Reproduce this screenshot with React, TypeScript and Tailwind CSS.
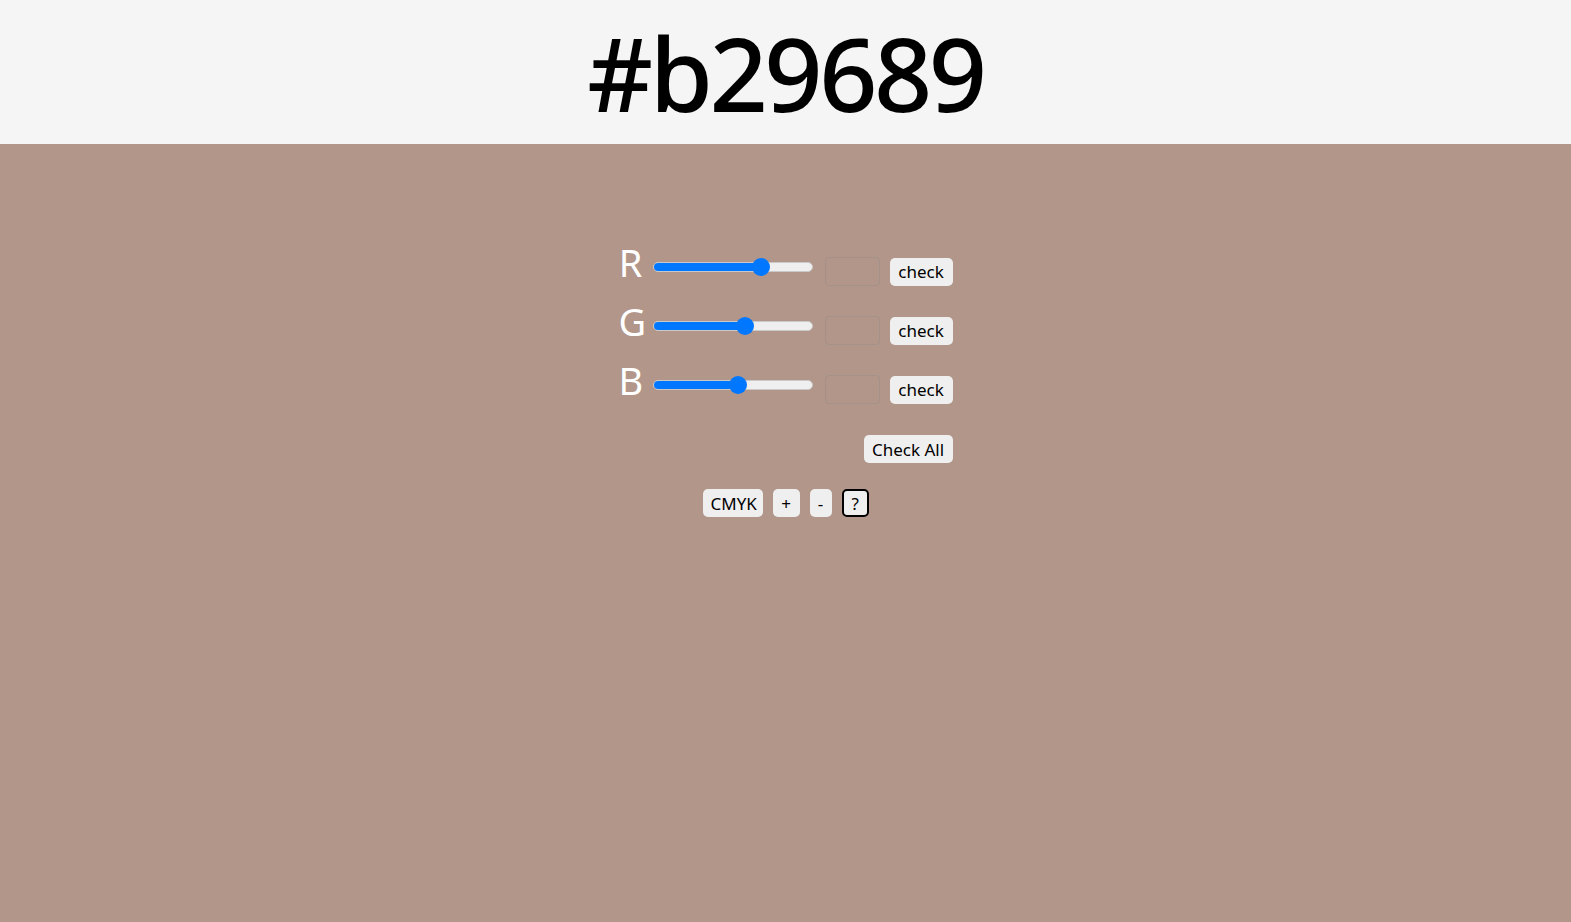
import React, { useState } from 'react';

const font = { fontFamily: '"Noto Sans", "Open Sans", sans-serif' };

type Channel = { label: string; value: number };

const Slider: React.FC<{ value: number }> = ({ value }) => {
  const pct = value / 255;
  return (
    <div className="relative w-[160px] h-[18px] flex items-center">
      <div className="w-full h-[10px] rounded-full bg-[#efefef] border border-[#c9c9c9] overflow-hidden">
        <div className="h-full bg-[#0077ff]" style={{ width: `${9 + pct * 142}px` }} />
      </div>
      <div
        className="absolute top-0 w-[18px] h-[18px] rounded-full bg-[#0077ff]"
        style={{ left: `${pct * 142}px` }}
      />
    </div>
  );
};

const Btn: React.FC<{ children: React.ReactNode; className?: string }> = ({ children, className = '' }) => (
  <button className={`h-[28px] px-[8px] rounded-[5px] bg-[#efefef] text-black text-[17px] leading-none ${className}`}>
    {children}
  </button>
);

export default function App() {
  const [channels] = useState<Channel[]>([
    { label: 'R', value: 178 },
    { label: 'G', value: 150 },
    { label: 'B', value: 137 },
  ]);

  return (
    <div className="min-h-[922px] flex flex-col bg-[#b29689]" style={font}>
      <header className="h-[144px] bg-[#f5f5f5] flex items-center justify-center">
        <h1 className="text-[102px] leading-none text-black font-medium tracking-[-3.5px] mt-[2px]">#b29689</h1>
      </header>

      <main className="flex flex-col items-center pt-[98px]">
        <div className="flex flex-col">
          {channels.map((c) => (
            <div key={c.label} className="h-[59px] flex items-center">
              <span className="w-[24px] text-right text-white text-[38px] leading-none mb-[19px]">{c.label}</span>
              <div className="ml-[10px] mb-[9px]">
                <Slider value={c.value} />
              </div>
              <input
                type="text"
                className="ml-[12px] w-[55px] h-[29px] rounded-[4px] border border-[#a3918a] bg-transparent"
              />
              <Btn className="ml-[10px] w-[63px]">check</Btn>
            </div>
          ))}
          <div className="flex justify-end mt-[16px]">
            <Btn className="w-[89px]">Check All</Btn>
          </div>
        </div>

        <div className="flex items-center gap-[10px] mt-[26px]">
          <Btn className="w-[60px]">CMYK</Btn>
          <Btn className="w-[27px] px-0">+</Btn>
          <Btn className="w-[22px] px-0">-</Btn>
          <Btn className="w-[27px] px-0 border-2 border-black">?</Btn>
        </div>
      </main>
    </div>
  );
}
